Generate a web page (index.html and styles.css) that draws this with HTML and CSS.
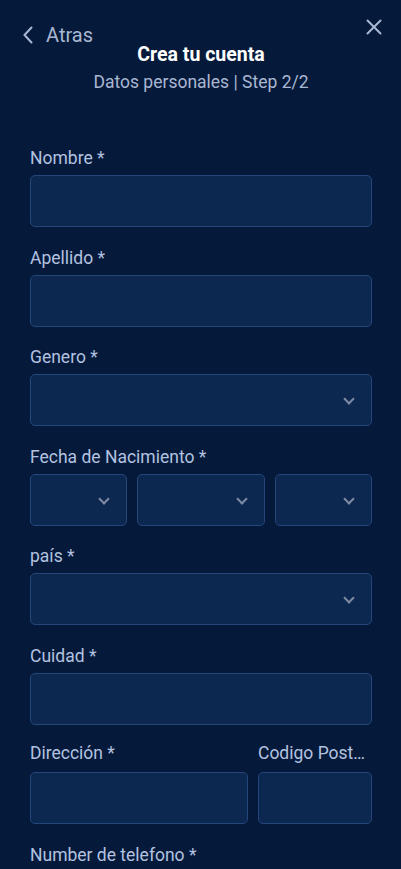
FILE: index.html
```html
<!DOCTYPE html>
<html lang="es">
<head>
<meta charset="utf-8">
<link rel="stylesheet" href="styles.css">
</head>
<body>
<div class="page">
  <header class="header">
    <div class="topbar">
      <a class="back">
        <svg class="back-icon" width="12" height="18" viewBox="0 0 12 18"><path d="M9.5 1.5 L2.5 9 L9.5 16.5" fill="none" stroke="#a9b7d3" stroke-width="2" stroke-linecap="round"/></svg>
        <span>Atras</span>
      </a>
      <svg class="close" width="16" height="16" viewBox="0 0 16 16"><path d="M1.5 1.5 L14.5 14.5 M14.5 1.5 L1.5 14.5" stroke="#a9b7d3" stroke-width="2" stroke-linecap="round"/></svg>
    </div>
    <h1 class="title">Crea tu cuenta</h1>
    <p class="subtitle">Datos personales | Step 2/2</p>
  </header>

  <form class="form">
    <div class="field">
      <label class="label">Nombre *</label>
      <div class="input"></div>
    </div>
    <div class="field">
      <label class="label">Apellido *</label>
      <div class="input"></div>
    </div>
    <div class="field">
      <label class="label">Genero *</label>
      <div class="input select"><span class="chev"></span></div>
    </div>
    <div class="field">
      <label class="label">Fecha de Nacimiento *</label>
      <div class="date-row">
        <div class="input select"><span class="chev"></span></div>
        <div class="input select"><span class="chev"></span></div>
        <div class="input select"><span class="chev"></span></div>
      </div>
    </div>
    <div class="field">
      <label class="label">país *</label>
      <div class="input select"><span class="chev"></span></div>
    </div>
    <div class="field">
      <label class="label">Cuidad *</label>
      <div class="input"></div>
    </div>
    <div class="addr-row">
      <div class="field addr">
        <label class="label">Dirección *</label>
        <div class="input"></div>
      </div>
      <div class="field zip">
        <label class="label ellipsis">Codigo Postal *</label>
        <div class="input"></div>
      </div>
    </div>
    <div class="field">
      <label class="label">Number de telefono *</label>
      <div class="input"></div>
    </div>
  </form>
</div>
</body>
</html>
```

FILE: styles.css
```css
* { box-sizing: border-box; }
html, body {
  margin: 0;
  padding: 0;
  background: #051a3a;
  font-family: Roboto, "Noto Sans", Arial, sans-serif;
  overflow: hidden;
}
.page {
  width: 401px;
  height: 869px;
  overflow: hidden;
  padding: 0 29px 0 30px;
  color: #b3c2e0;
}
.header {
  position: relative;
  padding-top: 42px;
  text-align: center;
}
.topbar {
  position: absolute;
  left: -8px;
  right: -10px;
  top: 18px;
  display: flex;
  justify-content: space-between;
  align-items: flex-start;
}
.back {
  display: flex;
  align-items: center;
  gap: 12px;
  font-size: 20px;
  line-height: 34px;
  color: #a9b7d3;
}
.close {
  margin-top: 1px;
}
.title {
  margin: 0;
  font-size: 19.5px;
  font-weight: 700;
  line-height: 26px;
  color: #ffffff;
}
.subtitle {
  margin: 2px 0 0;
  font-size: 17.5px;
  line-height: 24px;
  color: #a9b7d3;
}
.form {
  margin-top: 54px;
  display: flex;
  flex-direction: column;
  gap: 20.5px;
}
.field {
  display: flex;
  flex-direction: column;
  gap: 7px;
  min-width: 0;
}
.label {
  font-size: 17.5px;
  line-height: 20px;
  color: #b3c2e0;
  white-space: nowrap;
}
.ellipsis {
  overflow: hidden;
  text-overflow: ellipsis;
}
.input {
  position: relative;
  height: 52px;
  background: #0d2850;
  border: 1px solid #24467a;
  border-radius: 5px;
}
.chev {
  position: absolute;
  right: 18px;
  top: 20px;
  width: 8px;
  height: 8px;
  border-right: 2px solid #7d8aa3;
  border-bottom: 2px solid #7d8aa3;
  transform: rotate(45deg);
}
.date-row {
  display: grid;
  grid-template-columns: 97px 1fr 97px;
  gap: 10px;
}
.addr-row {
  display: grid;
  grid-template-columns: 218px 1fr;
  gap: 10px;
  margin-top: -2px;
}
.addr-row .field { gap: 9px; }
```
